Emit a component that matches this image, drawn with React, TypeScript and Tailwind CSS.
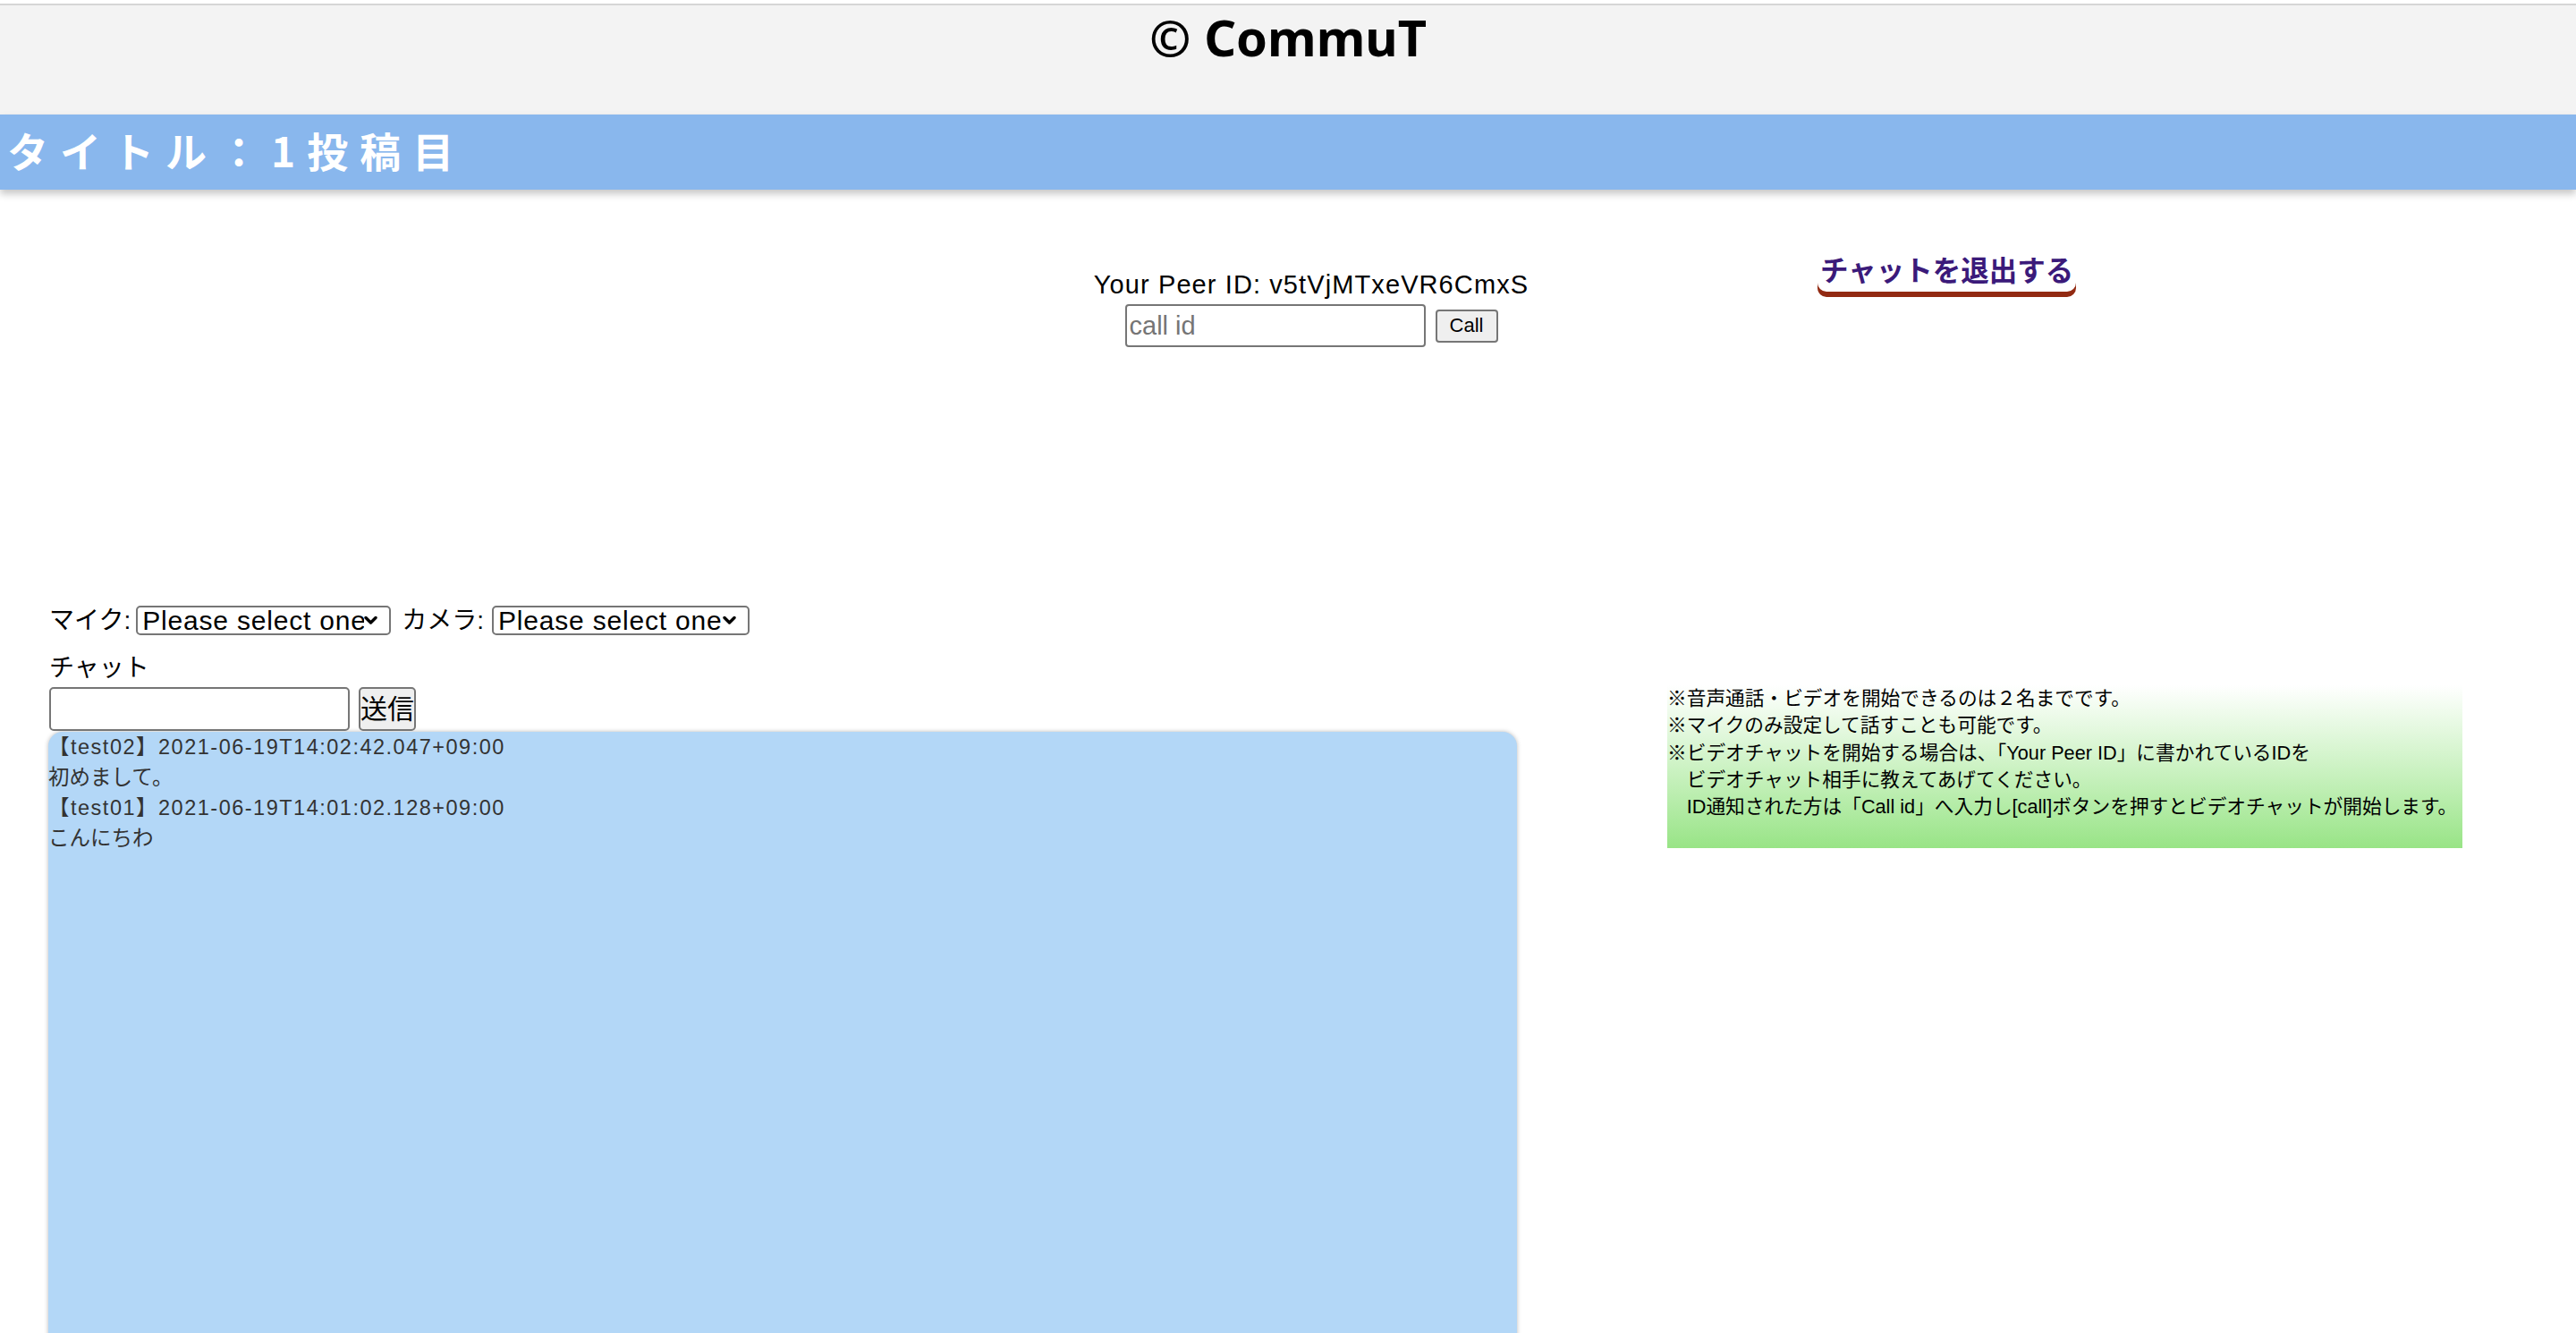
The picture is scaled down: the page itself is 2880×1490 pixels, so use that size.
import React from 'react';

const messages = [
  { user: 'test02', at: '2021-06-19T14:02:42.047+09:00', body: '初めまして。' },
  { user: 'test01', at: '2021-06-19T14:01:02.128+09:00', body: 'こんにちわ' },
];

function DeviceSelect({ width }: { width: string }) {
  return (
    <div className={`inline-flex items-center h-[33px] border-2 border-[#767676] rounded-[5px] bg-white ${width}`}>
      <select className="appearance-none bg-transparent outline-none h-full flex-1 min-w-0 pl-[5px] py-0 text-[30px] leading-none tracking-[0.8px] text-black">
        <option>Please select one</option>
      </select>
      <svg width="15" height="11" viewBox="0 0 15 11" className="mr-[13px] shrink-0">
        <polyline points="2,2.5 7.5,8 13,2.5" fill="none" stroke="#000" strokeWidth="3.4" strokeLinecap="round" strokeLinejoin="round" />
      </svg>
    </div>
  );
}

export default function App() {
  return (
    <div className="min-h-screen bg-white text-black font-['Liberation_Sans','Noto_Sans_CJK_JP',sans-serif] pt-[4px]">
      {/* header */}
      <header className="h-[124px] bg-[#f3f3f3] border-t-2 border-[#d6d6d6] pt-[7px] text-center">
        <h1 className="font-['Noto_Sans',sans-serif] font-bold text-[56px] leading-none">© CommuT</h1>
      </header>

      <div className="relative h-[84px] bg-[#89b7ed] flex items-center pl-[8px] shadow-[0_5px_8px_rgba(0,0,0,0.22)]">
        <h2 className="font-['Noto_Sans_CJK_JP',sans-serif] font-bold text-white text-[46px] leading-none tracking-[13px] -mt-[6px]">
          タイトル：1投稿目
        </h2>
      </div>

      {/* call area */}
      <div className="grid grid-cols-[1221px_490px_1fr] pt-[70px]">
        <div />
        <div className="pt-[19px] text-center">
          <p className="text-[29px] leading-[34px] tracking-[1.1px]">Your Peer ID: v5tVjMTxeVR6CmxS</p>
          <div className="mt-[5px] flex items-center justify-center gap-[11px]">
            <input
              placeholder="call id"
              className="w-[336px] h-[48px] border-2 border-[#767676] rounded-[4px] px-[3px] text-[29px] placeholder:text-[#757575] outline-none"
            />
            <button className="w-[70px] h-[37px] bg-[#efefef] border-2 border-[#767676] rounded-[4px] text-[22px] leading-none">
              Call
            </button>
          </div>
        </div>
        <div className="pl-[321px]">
          <a className="inline-block px-[3px] pb-[8px] rounded-[10px] bg-white shadow-[0_6px_0_#922a12] font-['Noto_Sans_CJK_JP',sans-serif] font-bold text-[31.5px] leading-[36px] text-[#3b1a7a]">
            チャットを退出する
          </a>
        </div>
      </div>

      {/* devices + chat + notice */}
      <div className="flex items-start pl-[54px] mt-[289px]">
        <div className="w-[1642px]">
          <div className="flex items-center h-[33px] text-[28px] leading-none">
            <span className="pl-[1px]">マイク:</span>
            <div className="ml-[6px]">
              <DeviceSelect width="w-[285px]" />
            </div>
            <span className="ml-[12px]">カメラ:</span>
            <div className="ml-[9px]">
              <DeviceSelect width="w-[288px]" />
            </div>
          </div>

          <p className="mt-[20px] pl-[1px] text-[28px] leading-[34px]">チャット</p>

          <div className="mt-[4px] flex items-center gap-[10px] pl-[1px]">
            <input className="w-[336px] h-[49px] border-2 border-[#767676] rounded-[5px] px-[4px] text-[28px] outline-none" />
            <button className="w-[64px] h-[49px] bg-[#efefef] border-2 border-[#767676] rounded-[5px] text-[30px] leading-none">
              送信
            </button>
          </div>

          <div className="mt-px h-[720px] bg-[#b3d7f7] rounded-[16px] shadow-[0_0_5px_rgba(0,0,0,0.28)] text-[#333] text-[23.5px]">
            {messages.map((m) => (
              <div key={m.at}>
                <p className="leading-[34px] tracking-[1.5px]">
                  【{m.user}】{m.at}
                </p>
                <p className="leading-[34px]">{m.body}</p>
              </div>
            ))}
          </div>
        </div>

        <div className="ml-[168px] mt-[91px] w-[889px] h-[182px] bg-gradient-to-b from-white to-[#98e486] text-[21.7px] leading-[30.3px] -translate-y-[2px]">
          <p>※音声通話・ビデオを開始できるのは２名までです。</p>
          <p>※マイクのみ設定して話すことも可能です。</p>
          <p>※ビデオチャットを開始する場合は、「Your Peer ID」に書かれているIDを</p>
          <p>　ビデオチャット相手に教えてあげてください。</p>
          <p>　ID通知された方は「Call id」へ入力し[call]ボタンを押すとビデオチャットが開始します。</p>
        </div>
      </div>
    </div>
  );
}
